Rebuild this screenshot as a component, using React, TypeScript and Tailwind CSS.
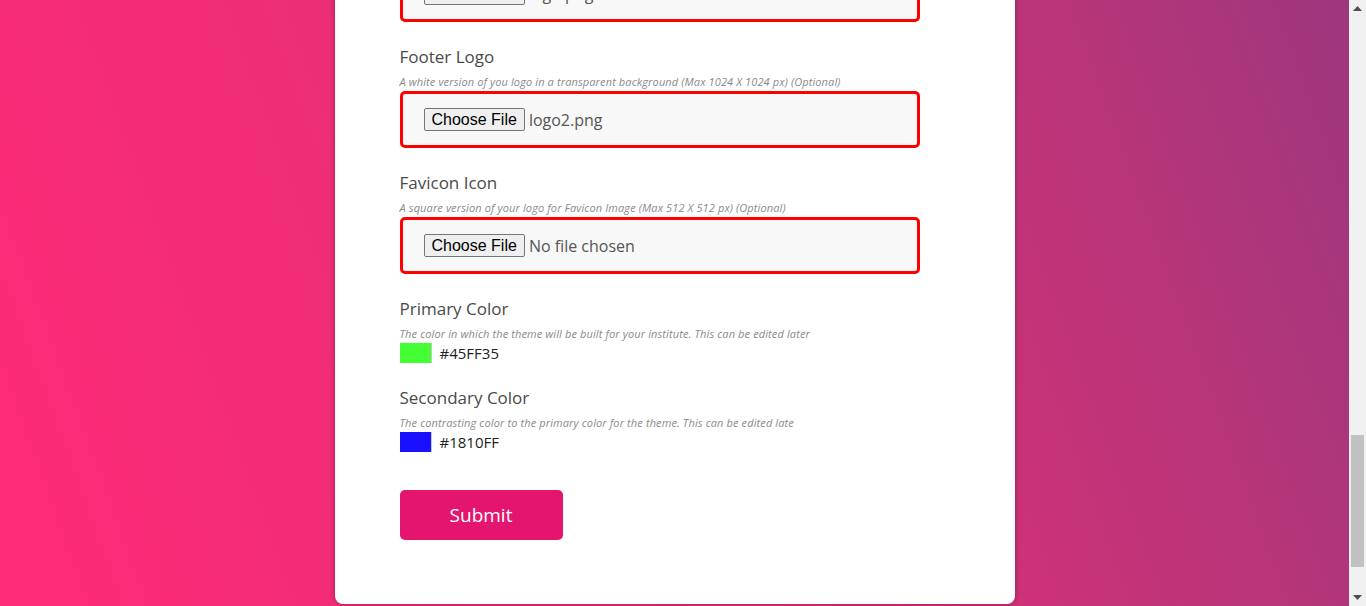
import React, { useLayoutEffect, useRef } from 'react';

type FieldProps = {
  label: string;
  help?: string;
  children: React.ReactNode;
};

function Field({ label, help, children }: FieldProps) {
  return (
    <div className="mb-[23px]">
      <div className="text-[17px] leading-6 text-[#4a4a4a]">{label}</div>
      {help && (
        <div className="mt-[6px] text-[11px] leading-[14px] tracking-[0.12px] italic text-[#8a8a8a]">{help}</div>
      )}
      <div className="mt-[2px]">{children}</div>
    </div>
  );
}

function FileBox({ fileName }: { fileName?: string }) {
  return (
    <div className="flex h-[57px] items-center rounded-[5px] border-[3px] border-[#ff0000] bg-[#f8f8f8] pl-[21px]">
      <span className="flex h-[23px] items-center rounded-[2px] border border-[#767676] bg-[#efefef] px-[7px] font-['Liberation_Sans',Arial,sans-serif] text-[16px] text-black">
        Choose File
      </span>
      <span className="ml-[4px] text-[16px] text-[#555]">{fileName ?? 'No file chosen'}</span>
    </div>
  );
}

function TextBox({ placeholder }: { placeholder: string }) {
  return (
    <div className="flex h-[57px] items-center rounded-[5px] border-[3px] border-[#ff0000] bg-[#f8f8f8] px-[21px] text-[16px] text-[#999]">
      {placeholder}
    </div>
  );
}

function ColorRow({ color, label }: { color: string; label: string }) {
  return (
    <div className="flex h-[20px] items-center">
      <div className="h-[20px] w-[32px] border-r border-[#c8c8c8]" style={{ backgroundColor: color }} />
      <span className="ml-[8px] text-[15px] leading-5 text-[#222]">{label}</span>
    </div>
  );
}

// the window's scrollbar, as it shows in the screenshot
function Scrollbar() {
  return (
    <div className="flex h-screen w-[17px] shrink-0 flex-col bg-[#f1f1f1]">
      <div className="flex h-[17px] items-center justify-center">
        <svg width="9" height="5" viewBox="0 0 9 5">
          <path d="M0 5 L4.5 0 L9 5 Z" fill="#505050" />
        </svg>
      </div>
      <div className="flex flex-1 flex-col pt-[418px]">
        <div className="mx-[2px] h-[132px] bg-[#c1c1c1]" />
      </div>
      <div className="flex h-[17px] items-center justify-center">
        <svg width="9" height="5" viewBox="0 0 9 5">
          <path d="M0 0 L9 0 L4.5 5 Z" fill="#505050" />
        </svg>
      </div>
    </div>
  );
}

export default function App() {
  const scrollRef = useRef<HTMLDivElement>(null);
  const cardRef = useRef<HTMLDivElement>(null);

  // start the page scrolled so the end of the form is in view
  useLayoutEffect(() => {
    const el = scrollRef.current;
    const card = cardRef.current;
    if (el && card) {
      el.scrollTop = card.offsetTop + card.offsetHeight - 604;
    }
  }, []);

  return (
    <div className="flex h-screen overflow-hidden font-['Open_Sans',sans-serif]">
      <div
        ref={scrollRef}
        className="relative h-screen flex-1 overflow-hidden bg-linear-[70deg] from-[#ff2a78] via-[#e43076] to-[#9d377c]"
      >
        <div className="pt-[60px] pb-[100px]">
          <div
            ref={cardRef}
            className="mx-auto w-[680px] rounded-[8px] bg-white pt-[50px] pb-[64px] pl-[65px] pr-[95px] shadow-[0_0_5px_rgba(0,0,0,0.35)]"
          >
            <h1 className="mb-[30px] text-[26px] font-semibold text-[#333]">Set Up Your Institute</h1>

            <Field label="Institute Name">
              <TextBox placeholder="Enter institute name" />
            </Field>
            <Field label="Institute Email">
              <TextBox placeholder="Enter email address" />
            </Field>
            <Field label="Phone Number">
              <TextBox placeholder="Enter phone number" />
            </Field>
            <Field label="Website">
              <TextBox placeholder="https://" />
            </Field>
            <Field label="Address">
              <TextBox placeholder="Enter address" />
            </Field>
            <Field label="City">
              <TextBox placeholder="Enter city" />
            </Field>
            <Field label="Country">
              <TextBox placeholder="Enter country" />
            </Field>
            <Field label="Subdomain" help="The address your students will use to reach the institute">
              <TextBox placeholder="yourinstitute" />
            </Field>
            <Field label="Header Logo" help="Your logo in a transparent background (Max 1024 X 1024 px)">
              <FileBox fileName="logo.png" />
            </Field>

            <Field
              label="Footer Logo"
              help="A white version of you logo in a transparent background (Max 1024 X 1024 px) (Optional)"
            >
              <FileBox fileName="logo2.png" />
            </Field>

            <Field
              label="Favicon Icon"
              help="A square version of your logo for Favicon Image (Max 512 X 512 px) (Optional)"
            >
              <FileBox />
            </Field>

            <Field
              label="Primary Color"
              help="The color in which the theme will be built for your institute. This can be edited later"
            >
              <ColorRow color="#45FF35" label="#45FF35" />
            </Field>

            <Field
              label="Secondary Color"
              help="The contrasting color to the primary color for the theme. This can be edited late"
            >
              <ColorRow color="#1810FF" label="#1810FF" />
            </Field>

            <button
              type="button"
              className="mt-[15px] h-[50px] w-[163px] rounded-[5px] bg-[#e4156f] text-[19px] font-medium text-white"
            >
              Submit
            </button>
          </div>
        </div>
      </div>
      <Scrollbar />
    </div>
  );
}
